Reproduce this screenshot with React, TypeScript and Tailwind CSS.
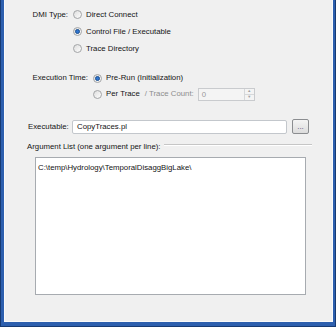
import React from 'react';

const font = "font-['Liberation_Sans',Arial,sans-serif] text-[7.8px] text-[#141414]";

const Radio: React.FC<{ on?: boolean }> = ({ on }) => (
  <span className="w-[9px] h-[9px] shrink-0 rounded-full border border-[#a3a5a7] bg-linear-to-br from-[#dedede] to-[#fdfdfd] flex items-center justify-center">
    {on && (
      <span className="w-[5px] h-[5px] rounded-full bg-[#2f74cf] border border-[#1d518f]" />
    )}
  </span>
);

const Option: React.FC<{ label?: string; on?: boolean; width: string; h: string; children?: React.ReactNode }> = ({
  label,
  on,
  width,
  h,
  children,
}) => (
  <div className={`flex items-center ${h}`}>
    <span className={`${width} shrink-0 text-right pr-[5px] whitespace-nowrap`}>{label}</span>
    <Radio on={on} />
    <span className="ml-[4px] whitespace-nowrap">{children}</span>
  </div>
);

export default function App() {
  return (
    <div className={`w-[336px] h-[327px] bg-[#2d5fae] border-l border-r border-b border-[#173a73] pl-[3px] pr-[2px] pb-[4px] flex ${font}`}>
      <div className="flex-1 bg-[#f0f0f0] border-l border-r border-b border-[#fafafa] flex flex-col pt-[6px]">
        {/* DMI type */}
        <Option label="DMI Type:" width="w-[68px]" h="h-[17px]">Direct Connect</Option>
        <Option on width="w-[68px]" h="h-[17px]">Control File / Executable</Option>
        <Option width="w-[68px]" h="h-[17px]">Trace Directory</Option>

        {/* execution time */}
        <div className="mt-[13px]">
          <Option label="Execution Time:" on width="w-[88px]" h="h-[16px]">Pre-Run (Initialization)</Option>
          <div className="flex items-center h-[16px]">
            <span className="w-[88px] shrink-0" />
            <Radio />
            <span className="ml-[4px] whitespace-nowrap">Per Trace</span>
            <span className="ml-[5px] whitespace-nowrap text-[#8d8d8d]">/ Trace Count:</span>
            <div className="ml-[4px] w-[57px] h-[13px] border border-[#c9cbce] bg-[#f4f4f4] flex">
              <span className="flex-1 pl-[3px] leading-[11px] text-[#9a9a9a]">0</span>
              <div className="w-[10px] flex flex-col border-l border-[#d6d8da]">
                <span className="flex-1 flex items-center justify-center border-b border-[#d6d8da] text-[4px] leading-none text-[#a0a0a0]">▲</span>
                <span className="flex-1 flex items-center justify-center text-[4px] leading-none text-[#a0a0a0]">▼</span>
              </div>
            </div>
          </div>
        </div>

        {/* executable */}
        <div className="mt-[17px] flex items-center h-[15px]">
          <span className="w-[67px] shrink-0 pl-[23px] whitespace-nowrap">Executable:</span>
          <div className="w-[215px] h-[14px] border border-[#c3c7cc] rounded-[2px] bg-white pl-[4px] leading-[12px]">
            CopyTraces.pl
          </div>
          <button className="ml-[5px] w-[17px] h-[15px] rounded-[2px] border border-[#8b8d90] bg-linear-to-b from-[#f4f4f4] to-[#dcdcdc] text-[8px] leading-[8px] text-[#5a4a7a] flex items-center justify-center">
            ...
          </button>
        </div>

        {/* argument list */}
        <div className="mt-[7px] flex items-center h-[12px]">
          <span className="pl-[22px] whitespace-nowrap">Argument List (one argument per line):</span>
          <div className="ml-[4px] mr-[20px] flex-1 -mt-[4px] border-t border-[#c6c6c6] border-b border-b-white" />
        </div>
        <div className="mt-[4px] ml-[30px] w-[271px] h-[138px] border border-[#a7abb0] bg-white pl-[2px] pt-[4px] whitespace-nowrap">
          C:\temp\Hydrology\TemporalDisaggBigLake\
        </div>
      </div>
    </div>
  );
}
